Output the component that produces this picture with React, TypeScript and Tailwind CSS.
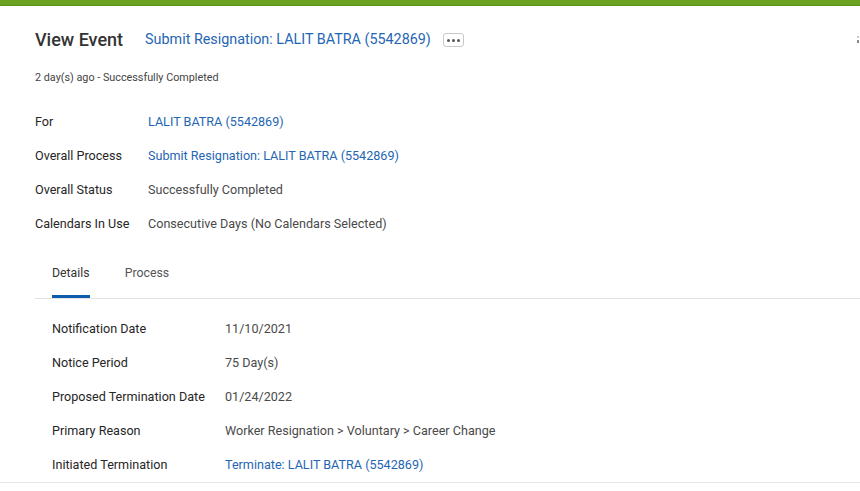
import React from "react";

const font = { fontFamily: "Roboto, 'Liberation Sans', sans-serif" };

function Row({ label, value, link, labelW, h }: { label: string; value: string; link?: boolean; labelW: string; h: string }) {
  return (
    <div className={`flex items-center ${h}`}>
      <div className={`${labelW} shrink-0 text-[12.6px] text-[#262626]`}>{label}</div>
      <div className={`text-[12.6px] ${link ? "text-[#1f66b3]" : "text-[#4a4a4a]"}`}>{value}</div>
    </div>
  );
}

export default function App() {
  return (
    <div className="relative w-[860px] h-[491px] overflow-hidden bg-white" style={font}>
      <div className="h-[6px] bg-[#6aa222] border-b border-[#5e9419]" />
      <div className="absolute right-[1px] top-[36px] flex flex-col gap-[2px]">
        <div className="w-[2px] h-[2px] bg-[#c8c8c8]" />
        <div className="w-[2px] h-[3px] bg-[#8a8a8a]" />
      </div>
      <div className="pl-[35px] pt-[22px] flex items-center h-[24px] box-content">
        <div className="text-[18px] font-medium text-[#333] leading-[24px]">View Event</div>
        <div className="ml-[22px] text-[14.35px] text-[#1f66b3] leading-[24px]">Submit Resignation: LALIT BATRA (5542869)</div>
        <div className="ml-[12px] w-[21px] h-[14px] border border-[#c9c9c9] rounded-[3px] flex items-center justify-center gap-[2px]">
          <span className="w-[3px] h-[3px] rounded-full bg-[#555]" />
          <span className="w-[3px] h-[3px] rounded-full bg-[#555]" />
          <span className="w-[3px] h-[3px] rounded-full bg-[#555]" />
        </div>
      </div>
      <div className="pl-[35px] mt-[19px] text-[10.8px] text-[#444] leading-[14px] h-[14px]">2 day(s) ago - Successfully Completed</div>
      <div className="pl-[35px] mt-[21px]">
        <Row h="h-[33.8px]" labelW="w-[113px]" label="For" value="LALIT BATRA (5542869)" link />
        <Row h="h-[33.8px]" labelW="w-[113px]" label="Overall Process" value="Submit Resignation: LALIT BATRA (5542869)" link />
        <Row h="h-[33.8px]" labelW="w-[113px]" label="Overall Status" value="Successfully Completed" />
        <Row h="h-[33.8px]" labelW="w-[113px]" label="Calendars In Use" value="Consecutive Days (No Calendars Selected)" />
      </div>
      <div className="ml-[35px] mt-[24px] border-b border-[#e2e2e2] pl-[17px] flex gap-[35px]">
        <div className="flex flex-col">
          <div className="text-[12.3px] leading-[16px] text-[#333]">Details</div>
          <div className="mt-[14px] h-[3px] bg-[#0b5cad]" />
        </div>
        <div className="flex flex-col">
          <div className="text-[12.3px] leading-[16px] text-[#555]">Process</div>
          <div className="mt-[14px] h-[3px] bg-transparent" />
        </div>
      </div>
      <div className="mt-[13px] border-b border-[#e6e6e6]">
        <div className="pl-[52px]">
          <Row h="h-[34px]" labelW="w-[173px]" label="Notification Date" value="11/10/2021" />
          <Row h="h-[34px]" labelW="w-[173px]" label="Notice Period" value="75 Day(s)" />
          <Row h="h-[34px]" labelW="w-[173px]" label="Proposed Termination Date" value="01/24/2022" />
          <Row h="h-[34px]" labelW="w-[173px]" label="Primary Reason" value="Worker Resignation > Voluntary > Career Change" />
          <Row h="h-[34px]" labelW="w-[173px]" label="Initiated Termination" value="Terminate: LALIT BATRA (5542869)" link />
        </div>
      </div>
    </div>
  );
}
